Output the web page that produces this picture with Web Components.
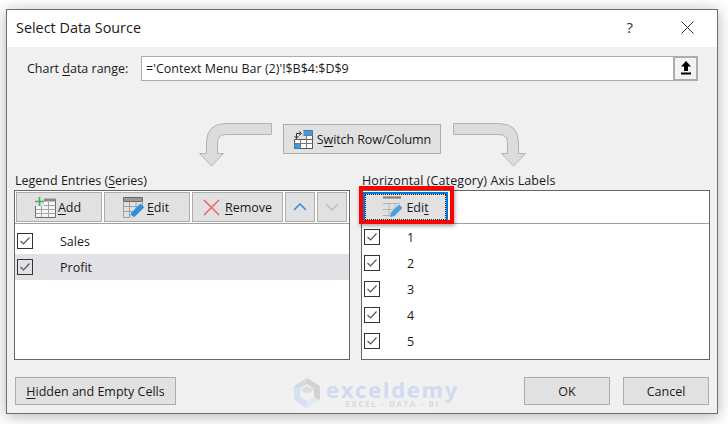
<!DOCTYPE html>
<html>
<head>
<meta charset="utf-8">
<title>Select Data Source</title>
<style>
  html, body { margin: 0; background: #fff; }
  body { width: 728px; height: 424px; overflow: hidden; font: 12.5px "Open Sans", "Noto Sans", sans-serif; color: #1a1a1a; }
  u { text-underline-offset: 2px; }
</style>
</head>
<body>
<template id="ico-add"><svg width="21" height="21" viewBox="0 0 21 21"><path d="M.5 2.500h20v18H.5z" fill="#f6f6f6" stroke="#6a6a6a"/><path d="M7 1.500h13.500v3H7z" fill="#8a8a8a"/><path d="M.5 8.500h20M.5 12.500h20M.5 16.500h20M6.500 6v14M13.500 5v15" stroke="#a4a4a4"/><path d="M0 0h9v9H0z" fill="#e1e1e1"/><path d="M4.500 0v9M0 4.500h9" stroke="#3fae63" stroke-width="1.600"/></svg></template>
<template id="ico-edit"><svg width="22" height="21" viewBox="0 0 22 21"><path d="M.5 .500h19v4H.5z" fill="#999" stroke="#666"/><path d="M.5 4.500v16h9M19.500 4.500v4M6.500 4.500v16M13 4.500v8M.5 9.500h16M.5 14.500h11" fill="none" stroke="#a0a0a0"/><path d="M7 20.500l1.200-4.800 9.300-9.300 3.800 3.800-9.300 9.300z" fill="#2f8fdc"/><path d="M7 21l1.200-3 1.800 1.800z" fill="#fff"/></svg></template>
<template id="ico-edit-grey"><svg width="21" height="22" viewBox="0 0 21 22"><path d="M1 1.500h18" stroke="#777" stroke-width="2"/><path d="M1 7.500h17M1 13.500h12M1 19.500h8M7 7.500v13M13 7.500v6" fill="none" stroke="#b4b4b4"/><path d="M8 21l1-4.500 8-8 3.500 3.500-8 8z" fill="#4a9fe4"/></svg></template>
<template id="ico-remove"><svg width="17" height="17" viewBox="0 0 17 17"><path d="M1 1l15 15M16 1L1 16" stroke="#ee5a5a" stroke-width="1.400"/></svg></template>
<template id="ico-switch"><svg width="21" height="21" viewBox="0 0 21 21"><path d="M1.500 10.500h18v9h-18zM10.500 1.500h9v18" fill="#fff" stroke="#555"/><path d="M10.500 1.500h9v5h-9z" fill="#3c9be0"/><path d="M1.500 14.500h6v5h-6z" fill="#3c9be0"/><path d="M1.500 14.500h18M7.500 10.500v9M13.500 6.500v13M10.500 6.500h9" stroke="#777" fill="none"/><path d="M3.500 9V4.500h4M6 2.500l2.500 2L6 6.500M1.500 7l2 2.500L5.500 7" fill="none" stroke="#333"/></svg></template>

<script>
// shared look for the grey dialog buttons
const estiloBoton = `
  :host { display: inline-flex; box-sizing: border-box; height: 30px; align-items: center; justify-content: center; gap: 3px;
          background: #e1e1e1; border: 1px solid #adadad; white-space: nowrap; }
  :host([foco]) { border: 2px solid #0078d7; outline: 1px dotted #222; outline-offset: -3px; }
  svg { display: block; }
  ::slotted(svg) { display: block; flex: none; }
`;

class BotonDialogo extends HTMLElement {
    constructor() {
        super();
        this.attachShadow({ mode: 'open' });
    }
    connectedCallback() {
        const icono = this.getAttribute('icono');
        this.shadowRoot.innerHTML = `<style>${estiloBoton}</style><slot name="icono"></slot><span><slot></slot></span>`;
        if (icono) {
            const t = document.getElementById(icono).content.cloneNode(true);
            this.shadowRoot.querySelector('slot[name=icono]').replaceWith(t);
        }
    }
}

class FilaCheck extends HTMLElement {
    constructor() {
        super();
        this.attachShadow({ mode: 'open' });
    }
    connectedCallback() {
        this.shadowRoot.innerHTML = `
            <style>
                :host { display: flex; align-items: center; height: 26px; padding-left: var(--fila-pad, 2px); }
                :host([sel]) { background: #e1e1e6; }
                .caja { box-sizing: border-box; width: 16px; height: 16px; border: 1px solid #333; background: transparent; flex: none; }
                svg { display: block; }
                .txt { margin-left: var(--fila-gap, 27px); }
            </style>
            <div class="caja"><svg width="14" height="14" viewBox="0 0 14 14"><path d="M2.500 7l3 3 6-6.500" fill="none" stroke="#555" stroke-width="1.200"/></svg></div>
            <span class="txt"><slot></slot></span>`;
    }
}

class PanelLista extends HTMLElement {
    constructor() {
        super();
        this.attachShadow({ mode: 'open' });
    }
    connectedCallback() {
        this.shadowRoot.innerHTML = `
            <style>
                :host { display: flex; flex-direction: column; min-width: 0; position: relative; }
                .titulo { height: 17px; line-height: 15px; padding-left: 1px; white-space: nowrap; }
                .marco { box-sizing: border-box; height: 170px; border: 1px solid #666; background: #fff; }
                .barra { display: flex; gap: 2px; height: 33px; box-sizing: border-box; padding: 1px 1px 0; border-bottom: 1px solid #a0a0a0; }
                .filas { padding-top: var(--filas-top, 0); }
            </style>
            <div class="titulo"><slot name="titulo"></slot></div>
            <div class="marco">
                <div class="barra"><slot name="barra"></slot></div>
                <div class="filas"><slot></slot></div>
            </div>
            <slot name="sobre"></slot>`;
    }
}

class FlechaCurva extends HTMLElement {
    constructor() {
        super();
        this.attachShadow({ mode: 'open' });
    }
    connectedCallback() {
        const giro = this.hasAttribute('derecha') ? 'transform: scaleX(-1);' : '';
        this.shadowRoot.innerHTML = `
            <style>:host { display: block; width: 73px; height: 44px; } svg { display: block; ${giro} }</style>
            <svg width="73" height="44" viewBox="0 0 73 44"><path d="M72.500 .500H27Q7.500 .500 7.500 20V30.500H.500L12.500 43L24.500 30.500H18.500V20Q18.500 11.500 27 11.500H72.500Z" fill="#dcdcdc" stroke="#b3b3b3"/></svg>`;
    }
}

class CampoRango extends HTMLElement {
    constructor() {
        super();
        this.attachShadow({ mode: 'open' });
    }
    connectedCallback() {
        this.shadowRoot.innerHTML = `
            <style>
                :host { display: flex; height: 25px; box-sizing: border-box; background: #fff; border: 1px solid #acacac; align-items: center; justify-content: space-between; padding-left: 4px; }
                .subir { box-sizing: border-box; width: 25px; height: 25px; margin: -1px -1px -1px 0; border: 2px solid #acacac; background: #f3f3f3; display: flex; align-items: center; justify-content: center; flex: none; }
                svg { display: block; }
            </style>
            <span><slot></slot></span>
            <div class="subir"><svg width="12" height="15" viewBox="0 0 12 15"><path d="M6 0l5 5.500H8V10H4V5.500H1z" fill="#000"/><path d="M1 12.500h10" stroke="#000" stroke-width="2"/></svg></div>`;
    }
}

class BarraTitulo extends HTMLElement {
    constructor() {
        super();
        this.attachShadow({ mode: 'open' });
    }
    connectedCallback() {
        this.shadowRoot.innerHTML = `
            <style>
                :host { display: flex; align-items: center; box-sizing: border-box; height: 37px; background: #fff; padding: 0 23px 3px 9px; font-size: 14.4px; }
                .nombre { flex: 1; }
                .ayuda { margin-right: 48px; font-size: 15px; color: #333; }
                svg { display: block; }
            </style>
            <span class="nombre"><slot></slot></span>
            <span class="ayuda">?</span>
            <svg width="13" height="13" viewBox="0 0 13 13"><path d="M.500 .500l12 12M12.500 .500l-12 12" stroke="#333"/></svg>`;
    }
}

class MarcaAgua extends HTMLElement {
    constructor() {
        super();
        this.attachShadow({ mode: 'open' });
    }
    connectedCallback() {
        this.shadowRoot.innerHTML = `
            <style>
                :host { position: absolute; left: 286px; top: 367px; width: 142px; height: 32px; display: flex; gap: 5px; background: #f1f1f2; pointer-events: none; font-family: "Open Sans", sans-serif; }
                svg { display: block; flex: none; }
                .col { display: flex; flex-direction: column; align-items: center; padding-top: 3px; }
                .n { display: block; font-size: 22px; font-weight: 700; line-height: 19px; letter-spacing: 1.700px; color: #d0daf0; white-space: nowrap; }
                .s { display: block; font-size: 8px; font-weight: 700; line-height: 9px; color: #dadada; letter-spacing: 1.600px; white-space: nowrap; }
            </style>
            <svg width="28" height="32" viewBox="0 0 28 32"><path d="M14 1L1 9v6l13-8z" fill="#cfd9ee"/><path d="M14 1l13 8v14l-6-3V12l-7-5z" fill="#d2d2d2"/><path d="M1 9v14l13 8V24l-7-4v-8z" fill="#d5e0f3"/><path d="M14 31l13-8-6-3-7 4z" fill="#e2e8f2"/><path d="M7 13l7-4 7 4-7 4z" fill="#dedede"/></svg>
            <div class="col"><span class="n">exceldemy</span><span class="s">EXCEL - DATA - BI</span></div>`;
    }
}

class VentanaDialogo extends HTMLElement {
    constructor() {
        super();
        this.attachShadow({ mode: 'open' });
    }
    connectedCallback() {
        this.shadowRoot.innerHTML = `
            <style>
                :host { display: flex; flex-direction: column; box-sizing: border-box; position: relative; width: 712px; height: 405px; margin: 9px 0 0 6px;
                        background: #f0f0f0; border: 1px solid #6e6e6e; box-shadow: 0 2px 14px rgba(0,0,0,.3); }
                .rango { display: flex; align-items: center; margin-top: 9px; padding-left: 20px; }
                .rango-label { width: 114px; flex: none; }
                .rango-campo { width: 557px; }
                .cambio { display: flex; align-items: flex-start; gap: 11px; margin-top: 42px; padding-left: 192px; height: 43px; }
                .listas { display: grid; grid-template-columns: 336px 349px; column-gap: 11px; padding-left: 7px; margin-top: 7px; }
                .pie { display: flex; margin-top: 17px; padding: 0 8px; }
            </style>
            <slot name="titulo"></slot>
            <div class="rango"><div class="rango-label"><slot name="rango-label"></slot></div><div class="rango-campo"><slot name="rango"></slot></div></div>
            <div class="cambio"><slot name="cambio"></slot></div>
            <div class="listas"><slot name="listas"></slot></div>
            <div class="pie"><slot name="pie"></slot></div>
            <slot name="marca"></slot>`;
    }
}

customElements.define('boton-dialogo', BotonDialogo);
customElements.define('fila-check', FilaCheck);
customElements.define('panel-lista', PanelLista);
customElements.define('flecha-curva', FlechaCurva);
customElements.define('campo-rango', CampoRango);
customElements.define('barra-titulo', BarraTitulo);
customElements.define('marca-agua', MarcaAgua);
customElements.define('ventana-dialogo', VentanaDialogo);
</script>

<ventana-dialogo>
  <barra-titulo slot="titulo">Select Data Source</barra-titulo>
  <span slot="rango-label">Chart <u>d</u>ata range:</span>
  <campo-rango slot="rango">='Context Menu Bar (2)'!$B$4:$D$9</campo-rango>

  <flecha-curva slot="cambio"></flecha-curva>
  <boton-dialogo slot="cambio" icono="ico-switch" style="width:158px;margin:1px 1px 0 0;letter-spacing:-.1px">S<u>w</u>itch Row/Column</boton-dialogo>
  <flecha-curva slot="cambio" derecha></flecha-curva>

  <panel-lista slot="listas" style="--filas-top:4px">
    <span slot="titulo">Legend Entries (<u>S</u>eries)</span>
    <boton-dialogo slot="barra" icono="ico-add" style="width:86px;gap:2px;padding-right:2px"><u>A</u>dd</boton-dialogo>
    <boton-dialogo slot="barra" icono="ico-edit" style="width:86px;gap:2px;padding-right:2px"><u>E</u>dit</boton-dialogo>
    <boton-dialogo slot="barra" icono="ico-remove" style="width:91px;gap:5px"><u>R</u>emove</boton-dialogo>
    <boton-dialogo slot="barra" style="width:30px"><svg width="14" height="8" viewBox="0 0 14 8"><path d="M1 7l6-6 6 6" fill="none" stroke="#2f8fdc" stroke-width="1.500"/></svg></boton-dialogo>
    <boton-dialogo slot="barra" style="width:30px"><svg width="14" height="8" viewBox="0 0 14 8"><path d="M1 1l6 6 6-6" fill="none" stroke="#bdbdbd" stroke-width="1.500"/></svg></boton-dialogo>
    <fila-check>Sales</fila-check>
    <fila-check sel>Profit</fila-check>
  </panel-lista>

  <panel-lista slot="listas" style="--fila-gap:27px">
    <span slot="titulo" style="letter-spacing:.09px">Horizontal (Category) Axis Labels</span>
    <boton-dialogo slot="barra" icono="ico-edit-grey" foco style="width:85px">Edi<u>t</u></boton-dialogo>
    <fila-check>1</fila-check>
    <fila-check>2</fila-check>
    <fila-check>3</fila-check>
    <fila-check>4</fila-check>
    <fila-check>5</fila-check>
    <div slot="sobre" style="position:absolute;left:-2px;top:13px;width:95px;height:38px;box-sizing:border-box;border:4px solid #f00;box-shadow:1px 2px 4px rgba(0,0,0,.35)"></div>
  </panel-lista>

  <boton-dialogo slot="pie" style="width:161px;height:28px;margin-right:348px"><u>H</u>idden and Empty Cells</boton-dialogo>
  <boton-dialogo slot="pie" style="width:86px;height:28px;margin-right:13px">OK</boton-dialogo>
  <boton-dialogo slot="pie" style="width:86px;height:28px">Cancel</boton-dialogo>
  <marca-agua slot="marca"></marca-agua>
</ventana-dialogo>
</body>
</html>
